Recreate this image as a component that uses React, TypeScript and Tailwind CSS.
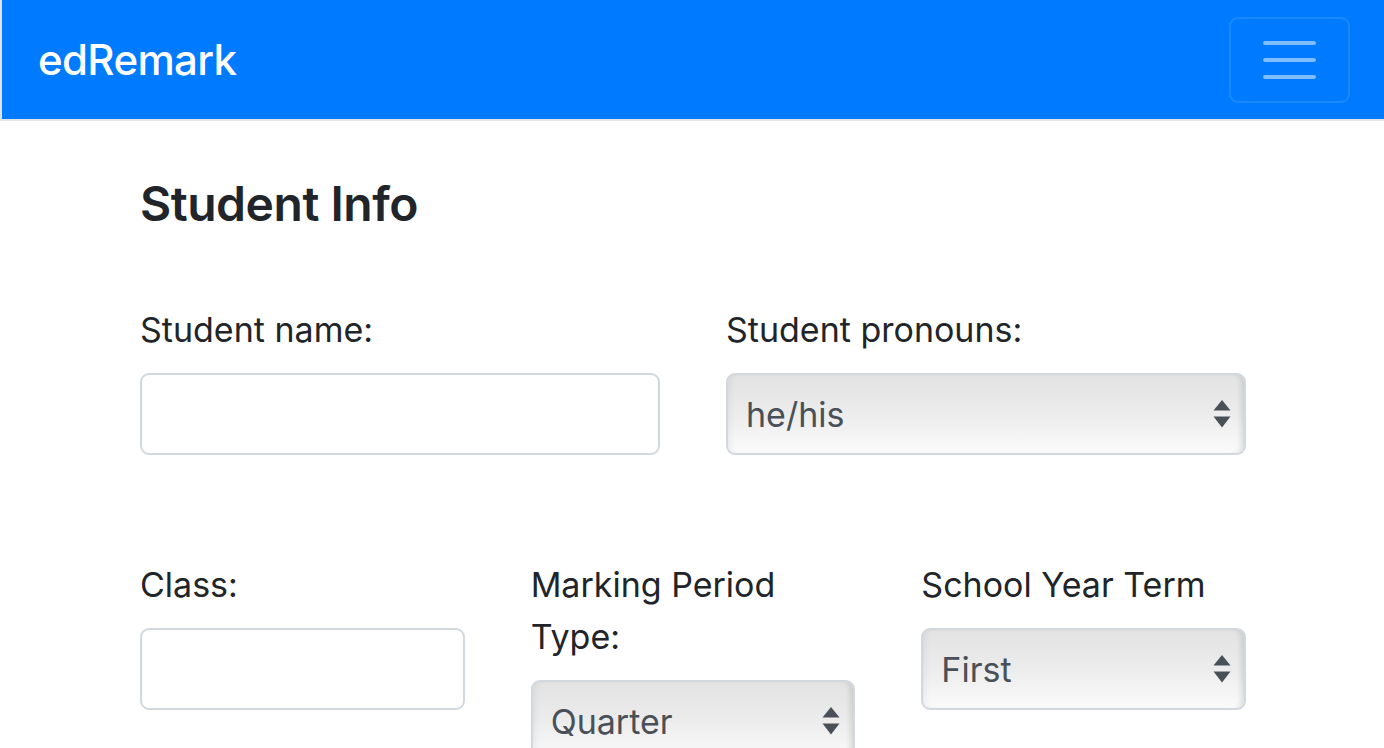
import type { ReactNode } from "react";

const font = { fontFamily: "Inter, 'Noto Sans', 'Liberation Sans', sans-serif" };

function Field({ label, children }: { label: ReactNode; children: ReactNode }) {
  return (
    <div className="flex min-w-0 flex-col">
      <label className="mb-[17px] text-[34px] leading-[52px] text-[#212529]">{label}</label>
      {children}
    </div>
  );
}

function TextInput() {
  return <div className="h-[82px] rounded-[9px] border-2 border-[#d3d8de] bg-white" />;
}

function SelectBox({ value }: { value: string }) {
  return (
    <div className="flex h-[82px] items-center justify-between rounded-[9px] border-2 border-[#d3d8de] bg-gradient-to-b from-[#e3e3e3] via-[#ececec] to-[#fbfbfb] pl-[18px] pr-[13px] shadow-[inset_-6px_0_6px_-4px_rgba(0,0,0,0.14),inset_6px_0_6px_-4px_rgba(0,0,0,0.06)]">
      <span className="text-[34px] text-[#495057]">{value}</span>
      <svg width="18" height="28" viewBox="0 0 18 28" className="shrink-0">
        <path d="M9 0 L17.5 10.5 H0.5 Z" fill="#4a5058" />
        <path d="M0.5 16.5 H17.5 L9 27.5 Z" fill="#4a5058" />
      </svg>
    </div>
  );
}

export default function App() {
  return (
    <div className="min-h-screen bg-white" style={font}>
      <nav className="flex h-[121px] items-center justify-between border-b-2 border-l-2 border-b-[#e4e6ea] border-l-[#dfe3e9] bg-[#007bff] pl-[36px] pr-[34px]">
        <span className="text-[42px] font-medium tracking-[-0.015em] text-white">edRemark</span>
        <button className="flex h-[86px] w-[121px] flex-col items-center justify-center gap-[13px] rounded-[9px] border-2 border-white/10">
          <span className="h-[4px] w-[53px] rounded-full bg-white/50" />
          <span className="h-[4px] w-[53px] rounded-full bg-white/50" />
          <span className="h-[4px] w-[53px] rounded-full bg-white/50" />
        </button>
      </nav>

      <main className="box-content w-[1106px] pl-[140px]">
        <h3 className="mt-[52px] text-[48px] font-semibold leading-[62px] tracking-[-0.01em] text-[#212529]">
          Student Info
        </h3>

        <div className="mt-[69px] grid grid-cols-2 gap-x-[66px]">
          <Field label="Student name:">
            <TextInput />
          </Field>
          <Field label="Student pronouns:">
            <SelectBox value="he/his" />
          </Field>
        </div>

        <div className="mt-[104px] grid grid-cols-3 items-start gap-x-[66px]">
          <Field label="Class:">
            <TextInput />
          </Field>
          <Field label={<>Marking Period<br />Type:</>}>
            <SelectBox value="Quarter" />
          </Field>
          <Field label="School Year Term">
            <SelectBox value="First" />
          </Field>
        </div>
        <div className="h-[80px]" />
      </main>
    </div>
  );
}
